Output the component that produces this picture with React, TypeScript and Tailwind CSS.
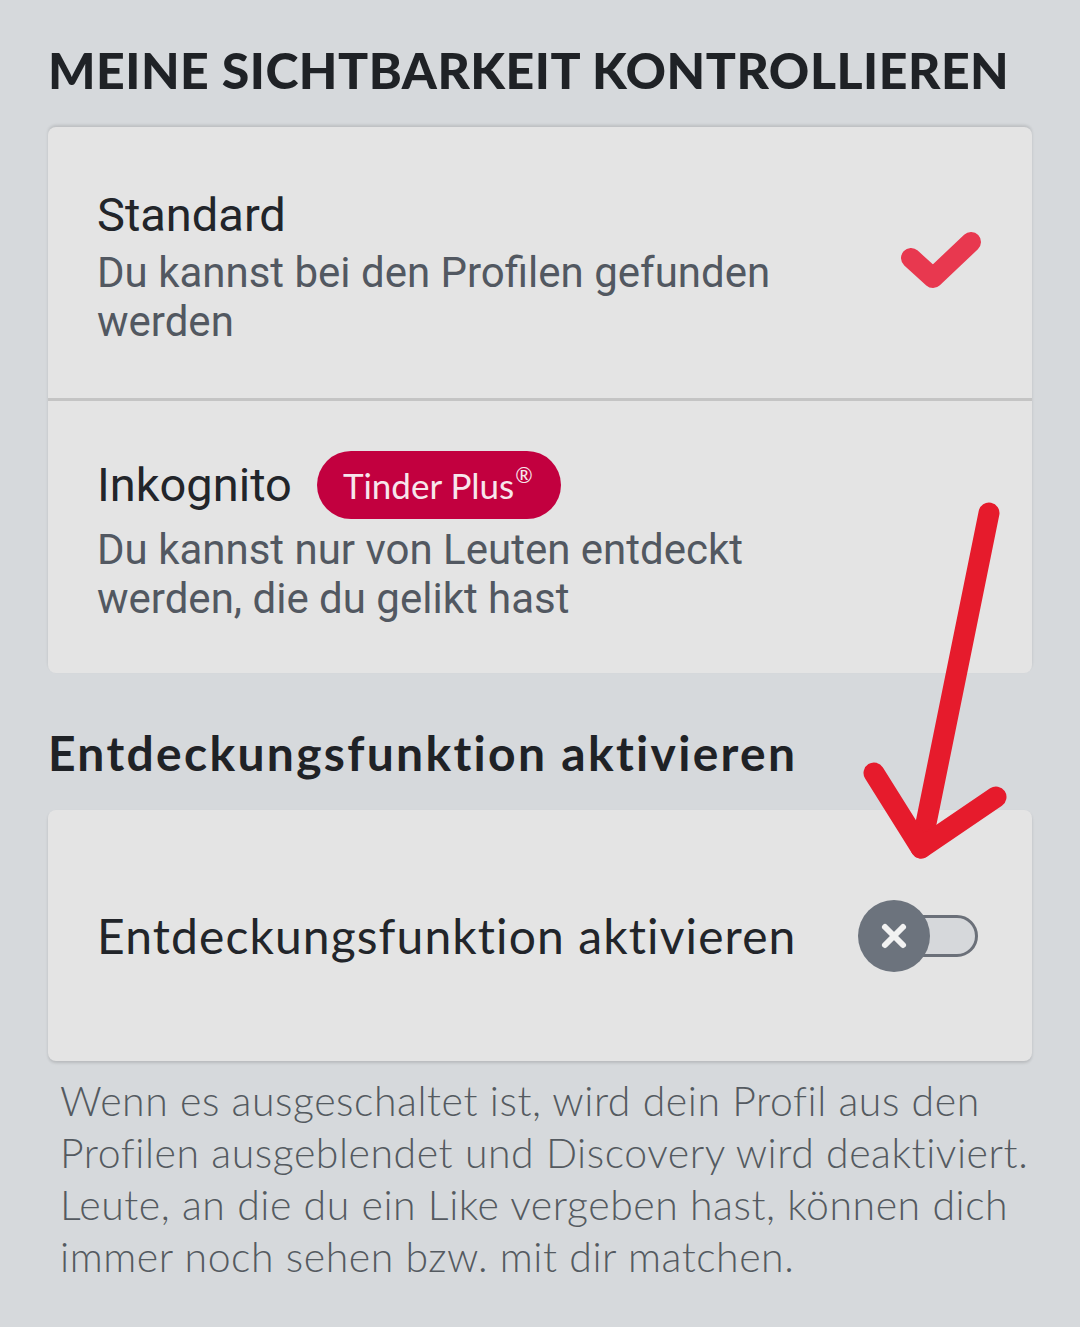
import { X } from "lucide-react";

const proxima = { fontFamily: "Lato, 'Open Sans', sans-serif" };
const roboto = { fontFamily: "Roboto, 'Noto Sans', sans-serif" };

function Check() {
  return (
    <svg width="90" height="70" viewBox="0 0 90 70" className="-mr-[3px]">
      <path d="M12 30 L34 50 L72 14" fill="none" stroke="#e8384f" strokeWidth="20" strokeLinecap="round" strokeLinejoin="round" />
    </svg>
  );
}

function Toggle() {
  return (
    <div className="relative w-[120px] h-[74px] flex items-center">
      <div className="absolute left-[20px] right-0 h-[42px] rounded-full bg-[#d6d8db] border-[3px] border-[#6b7079]" />
      <div className="absolute left-0 w-[72px] h-[72px] rounded-full bg-[#6c737d] flex items-center justify-center">
        <X size={36} color="#f2f2f2" strokeWidth={4} />
      </div>
    </div>
  );
}

export default function App() {
  return (
    <div className="relative w-[1080px] h-[1327px] bg-[#d6d9dc] overflow-hidden">
      <div className="px-[48px] pt-[44px]">
        <h1 style={proxima} className="text-[50px] leading-[52px] font-black tracking-[0.5px] text-[#1f2226] uppercase">
          Meine Sichtbarkeit kontrollieren
        </h1>

        <div className="mt-[31px] rounded-[8px] bg-[#e4e4e4] shadow-[0_-2px_3px_rgba(0,0,0,0.12)] overflow-hidden">
          <div className="h-[274px] flex items-center pl-[49px] pr-[46px] border-b-[3px] border-[#c4c4c4]">
            <div className="flex-1 pt-[8px]" style={roboto}>
              <div className="text-[47px] leading-[54px] text-[#22252a]">Standard</div>
              <div className="mt-[6px] text-[42px] leading-[49px] text-[#525861] w-[710px]">
                Du kannst bei den Profilen gefunden werden
              </div>
            </div>
            <Check />
          </div>
          <div className="h-[272px] flex items-center pl-[49px]" style={roboto}>
            <div>
              <div className="flex items-center gap-[25px]">
                <span className="text-[47px] leading-[54px] text-[#22252a]">Inkognito</span>
                <span style={proxima} className="h-[68px] pl-[26px] pr-[28px] rounded-full bg-[#c2003f] text-[#f7e6ec] text-[35px] flex items-center">
                  Tinder Plus<sup className="text-[21px] -top-[10px] ml-[1px]">®</sup>
                </span>
              </div>
              <div className="mt-[6px] text-[42px] leading-[49px] text-[#525861] w-[710px]">
                Du kannst nur von Leuten entdeckt werden, die du gelikt hast
              </div>
            </div>
          </div>
        </div>

        <h2 style={proxima} className="mt-[52px] text-[48px] leading-[56px] font-bold tracking-[2.3px] text-[#1f2226]">
          Entdeckungsfunktion aktivieren
        </h2>

        <div className="mt-[29px] h-[251px] rounded-[8px] bg-[#e4e4e4] shadow-[0_2px_3px_rgba(0,0,0,0.14)] flex items-center justify-between pl-[49px] pr-[54px]">
          <span style={proxima} className="text-[48px] text-[#22252a] tracking-[1.1px]">
            Entdeckungsfunktion aktivieren
          </span>
          <Toggle />
        </div>

        <p style={proxima} className="mt-[14px] pl-[12px] -mr-[20px] text-[41px] leading-[52px] font-light tracking-[0.55px] text-[#545a60]">
          Wenn es ausgeschaltet ist, wird dein Profil aus den Profilen ausgeblendet und Discovery wird deaktiviert. Leute, an die du ein Like vergeben hast, können dich immer noch sehen bzw. mit dir matchen.
        </p>
      </div>

      {/* hand-drawn arrow pointing at the toggle */}
      <svg className="absolute left-0 top-0 pointer-events-none" width="1080" height="1327">
        <g fill="none" stroke="#e61b2c" strokeWidth="21" strokeLinecap="round" strokeLinejoin="round">
          <path d="M989 513 L921 848" />
          <path d="M874 773 L921 848 L996 797" />
        </g>
      </svg>
    </div>
  );
}
